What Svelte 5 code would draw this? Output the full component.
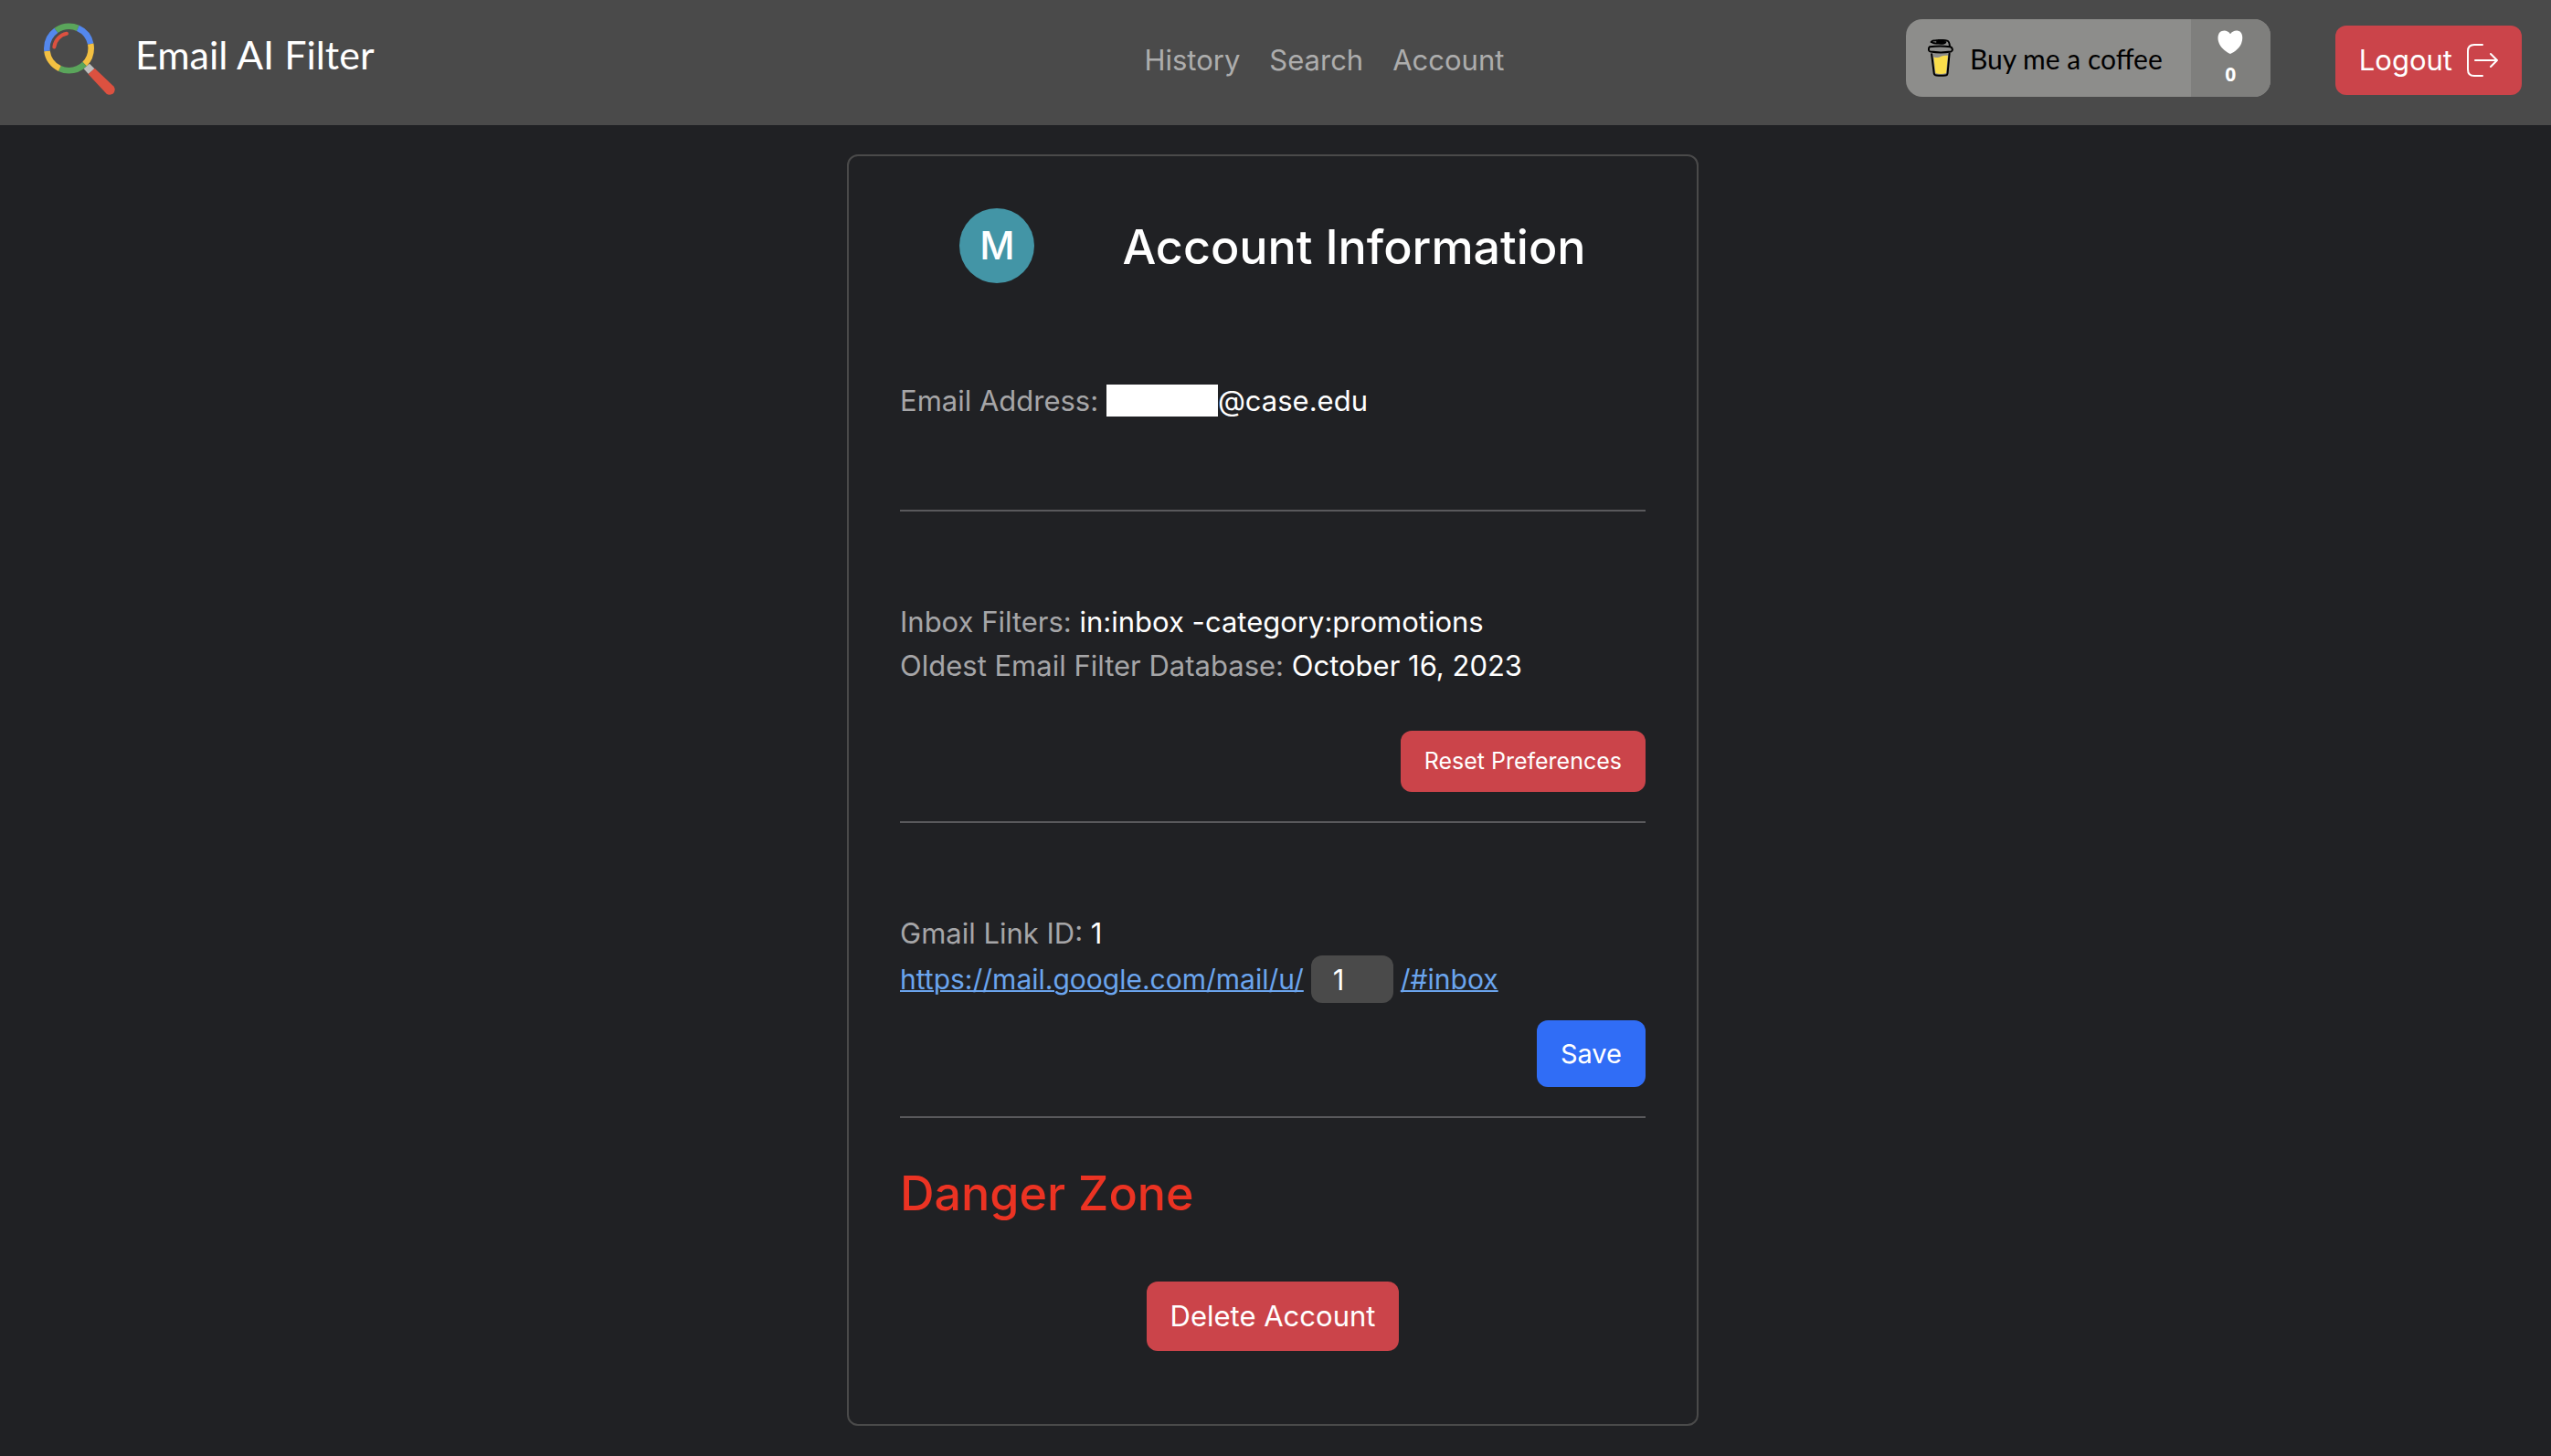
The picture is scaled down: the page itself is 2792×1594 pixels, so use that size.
<script>
  let linkId = $state('1');
  const savedId = '1';
  const inboxHref = $derived(`https://mail.google.com/mail/u/${linkId}/#inbox`);

  // Coloured ring segments of the logo: start angle and sweep in degrees.
  const ring = [
    { tone: 'green', dash: '60 300', offset: -234 },
    { tone: 'sky', dash: '54 306', offset: -294 },
    { tone: 'yellow', dash: '57 303', offset: -348 },
    { tone: 'green', dash: '70 290', offset: -45 },
    { tone: 'yellow', dash: '58 302', offset: -115 },
    { tone: 'sky', dash: '61 299', offset: -173 }
  ];
</script>

<header class="navbar">
  <div class="brand-area">
    <a class="brand" href="#home">
      <svg class="logo" viewBox="0 0 82 82" fill="none" aria-hidden="true">
        {#each ring as part}
          <circle
            class={part.tone}
            cx="29.5"
            cy="30"
            r="24.2"
            stroke-width="6.6"
            pathLength="360"
            stroke-dasharray={part.dash}
            stroke-dashoffset={part.offset}
          />
        {/each}
        <path class="red" d="M13.3 28.5A17 17 0 0 1 27 13.8" stroke-width="4" stroke-linecap="round" />
        <path class="collar" d="M45.6 52.2L52 46.8L57.5 52.2L50.8 58Z" />
        <path class="grip" d="M50.6 58.2L57.6 51.8L78.4 71.6A5.6 5.6 0 0 1 70.2 79.2Z" />
      </svg>
      <span class="brand-name">Email AI Filter</span>
    </a>
  </div>

  <nav class="links" aria-label="Main">
    <a href="#history">History</a>
    <a href="#search">Search</a>
    <a href="#account">Account</a>
  </nav>

  <div class="actions">
    <a class="coffee" href="#coffee">
      <span class="coffee-main">
        <svg class="cup" viewBox="0 0 84 124" aria-hidden="true">
          <path d="M19 58Q32 64 43 57Q54 52 66 54L60 112Q42 118 25 112Z" fill="#fade4b" />
          <g fill="none" stroke="#000" stroke-width="6" stroke-linecap="round" stroke-linejoin="round">
            <path d="M12 49L20 113Q21 119 28 119.500Q43 121 58 119.500Q64 119 65 112L71 47" />
            <path d="M5 25Q1 30 3 37Q4 40 9 41Q42 46 76 41Q81 40 81 34Q80 27 74 25Q40 20 5 25Z" />
            <path d="M11 9Q14 4 26 4Q46 1 64 5Q71 7 72 23" />
            <path d="M11 9Q18 14 36 14Q58 15 58 10Q48 7 30 9" />
          </g>
        </svg>
        <span>Buy me a coffee</span>
      </span>
      <span class="coffee-count">
        <svg class="heart" viewBox="0 0 84 80" aria-hidden="true">
          <path d="M42 13C33-2 15-1 7 7C-2 17-1 34 5 46C13 62 29 74 42 80C58 72 73 60 79 45C85 30 84 14 76 6C68-1 51-1 42 13Z" fill="#fff" />
        </svg>
        <span>0</span>
      </span>
    </a>
    <button class="btn danger logout" type="button">
      Logout
      <svg class="exit" viewBox="0 0 34 36" fill="none" stroke="#fff" stroke-width="2" stroke-linecap="round" stroke-linejoin="round" aria-hidden="true">
        <path d="M17 1H8Q1 1 1 8V28Q1 35 8 35H17" />
        <path d="M9 18H33M26 11L33 18L26 25" />
      </svg>
    </button>
  </div>
</header>

<main>
  <article class="card">
    <header class="title">
      <span class="avatar">M</span>
      <h1>Account Information</h1>
    </header>

    <section class="email">
      <p><span class="label">Email Address:</span> <span class="redacted"></span>@case.edu</p>
    </section>

    <hr />

    <section class="block">
      <p><span class="label">Inbox Filters:</span> in:inbox -category:promotions</p>
      <p><span class="label">Oldest Email Filter Database:</span> October 16, 2023</p>
      <button class="btn danger small reset" type="button">Reset Preferences</button>
    </section>

    <hr />

    <section class="block">
      <p><span class="label">Gmail Link ID:</span> {savedId}</p>
      <div class="link-row">
        <a href={inboxHref}>https://mail.google.com/mail/u/</a>
        <input type="text" aria-label="Gmail Link ID" bind:value={linkId} />
        <a href={inboxHref}>/#inbox</a>
      </div>
      <button class="btn primary save" type="button">Save</button>
    </section>

    <hr />

    <section class="zone">
      <h2>Danger Zone</h2>
      <button class="btn danger" type="button">Delete Account</button>
    </section>
  </article>
</main>

<style>
  :global(body) {
    background: #202124;
    color: #fff;
    font-family: Inter, 'Liberation Sans', sans-serif;
    font-size: 31px;
    line-height: 48px;
  }

  .navbar {
    display: flex;
    align-items: center;
    box-sizing: border-box;
    min-height: 137px;
    padding: 0 32px 10px 46px;
    background: #4a4a4a;
  }

  .brand-area {
    display: flex;
    flex: 13 1 0;
  }

  .brand {
    display: flex;
    align-items: center;
    gap: 20px;
    color: #fff;
    text-decoration: none;
  }

  .logo {
    width: 82px;
    height: 82px;
  }

  .green {
    stroke: #5aa55b;
  }

  .sky {
    stroke: #5488ee;
  }

  .yellow {
    stroke: #f3c042;
  }

  .red {
    stroke: #dc5140;
  }

  .collar {
    fill: #bdbdbd;
  }

  .grip {
    fill: #dc5140;
  }

  .brand-name {
    padding-bottom: 8px;
    font-family: Lato, sans-serif;
    font-size: 43px;
    white-space: nowrap;
  }

  .links {
    display: flex;
    gap: 32px;
    padding-top: 4px;
  }

  .links a {
    color: #adadad;
    text-decoration: none;
  }

  .actions {
    display: flex;
    flex: 12 1 0;
    align-items: center;
    justify-content: flex-end;
    gap: 71px;
  }

  .coffee {
    display: flex;
    height: 85px;
    overflow: hidden;
    border-radius: 18px;
    background: #8d8d8b;
    color: #000;
    font-family: Lato, sans-serif;
    font-size: 30px;
    text-decoration: none;
    white-space: nowrap;
  }

  .coffee-main {
    display: flex;
    align-items: center;
    gap: 18px;
    padding: 0 31px 0 24px;
  }

  .cup {
    width: 28px;
    height: 41px;
  }

  .coffee-count {
    display: flex;
    flex-direction: column;
    align-items: center;
    gap: 8px;
    box-sizing: border-box;
    width: 87px;
    padding-top: 12px;
    background: #7f7f7d;
    color: #fff;
    font-family: 'Open Sans', sans-serif;
    font-size: 21px;
    font-weight: 700;
    line-height: 28px;
  }

  .heart {
    width: 28px;
    height: 26px;
  }

  .btn {
    display: inline-flex;
    align-items: center;
    justify-content: center;
    padding: 14px 26px;
    border: 0;
    border-radius: 12px;
    color: #fff;
    font: inherit;
    white-space: nowrap;
    cursor: pointer;
  }

  .danger {
    background: #cb444a;
  }

  .primary {
    background: #306df6;
  }

  .small {
    font-size: 25px;
    line-height: 39px;
  }

  .logout {
    gap: 16px;
    margin-top: 4px;
  }

  .exit {
    width: 34px;
    height: 36px;
  }

  main {
    padding: 32px 6px 32px 0;
  }

  .card {
    box-sizing: border-box;
    max-width: 932px;
    margin: 0 auto;
    padding: 57px 56px 56px;
    border: 2px solid #4a4a4a;
    border-radius: 12px;
  }

  .title {
    display: flex;
    align-items: center;
    justify-content: center;
    gap: 96px;
  }

  .avatar {
    display: grid;
    place-items: center;
    width: 82px;
    height: 82px;
    border-radius: 50%;
    background: #4395a6;
    font-size: 42px;
    font-weight: 500;
  }

  h1,
  h2 {
    margin: 0;
    font-size: 52px;
    font-weight: 500;
    line-height: 66px;
  }

  h1 {
    padding-top: 4px;
  }

  p {
    margin: 0;
  }

  .label {
    color: #a6a6a8;
  }

  .redacted {
    display: inline-block;
    width: 122px;
    height: 35px;
    background: #fff;
    vertical-align: -6px;
  }

  hr {
    height: 2px;
    margin: 0;
    border: 0;
    background: #59595c;
  }

  .email {
    padding: 105px 0 95px;
  }

  .block {
    display: flex;
    flex-direction: column;
    padding: 97px 0 32px;
  }

  .reset {
    align-self: flex-end;
    margin-top: 47px;
  }

  .link-row {
    display: flex;
    align-items: center;
    gap: 8px;
  }

  .link-row a {
    color: #6ba5ee;
    font-size: 30px;
    text-decoration-thickness: 2px;
  }

  .link-row input {
    box-sizing: border-box;
    width: 90px;
    height: 52px;
    padding: 0 24px;
    border: 0;
    border-radius: 12px;
    background: #4a4a4a;
    color: #fff;
    font: inherit;
  }

  .save {
    align-self: flex-end;
    margin-top: 19px;
    font-size: 29px;
    line-height: 45px;
  }

  .zone {
    display: flex;
    flex-direction: column;
    align-items: center;
    gap: 63px;
    padding: 50px 0 24px;
  }

  h2 {
    align-self: flex-start;
    color: #eb3323;
  }
</style>
